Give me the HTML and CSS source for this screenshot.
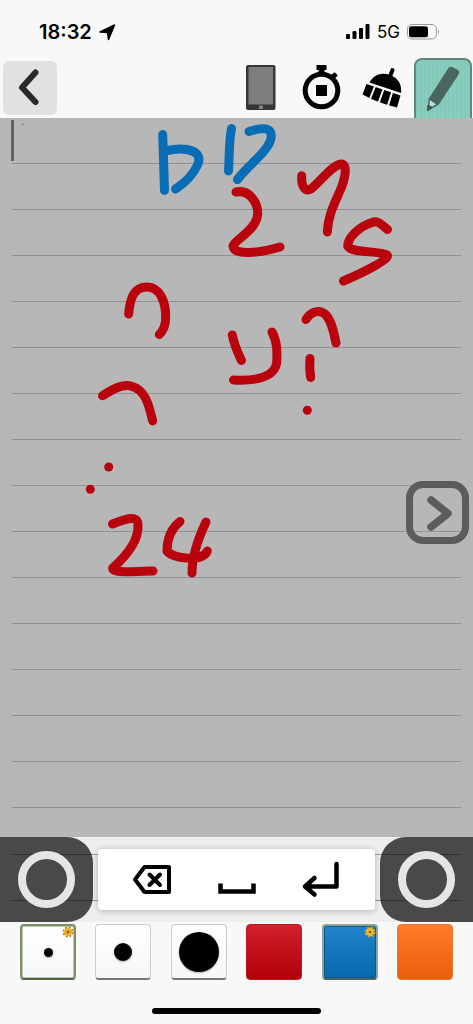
FILE: index.html
```html
<!DOCTYPE html>
<html lang="en">
<head>
    <meta charset="UTF-8">
    <meta name="viewport" content="width=device-width, initial-scale=1.0">
    <title>Notes</title>
    <link rel="stylesheet" href="styles.css">
</head>
<body>
    <header class="status">
        <div class="status-left">
            <span class="time">18:32</span>
            <svg width="17" height="17" viewBox="0 0 17 17"><path d="M15.500 1L9.500 15.500L8.500 8.500L1 8Z" stroke="#000" stroke-width="1.500" stroke-linejoin="round"/></svg>
        </div>
        <div class="status-right">
            <svg width="24" height="16" viewBox="0 0 24 16">
                <rect x="0" y="10" width="4" height="5" rx="1"/>
                <rect x="6.500" y="7" width="4" height="8" rx="1"/>
                <rect x="13" y="4" width="4" height="11" rx="1"/>
                <rect x="19.500" y="0" width="4" height="15" rx="1"/>
            </svg>
            <span class="network">5G</span>
            <svg width="33" height="16" viewBox="0 0 33 16">
                <rect x="0.500" y="0.500" width="29" height="14.500" rx="4.500" fill="none" stroke="#999"/>
                <rect x="2" y="2.200" width="19" height="11" rx="2.500"/>
                <path d="M31 5.500Q33 7.700 31 10Z" fill="#999"/>
            </svg>
        </div>
    </header>

    <nav class="toolbar">
        <button class="back" aria-label="Back">
            <svg width="54" height="54" viewBox="0 0 54 54"><path d="M32.500 11.500L19 26.500L32.500 41" fill="none" stroke="#292929" stroke-width="6" stroke-linecap="round" stroke-linejoin="round"/></svg>
        </button>
        <div class="tools">
            <button class="tool" aria-label="Device">
                <svg width="30" height="46" viewBox="0 0 30 46">
                    <rect x="0" y="0" width="29.500" height="45" rx="2" fill="#363636"/>
                    <rect x="2.500" y="2" width="24.500" height="37.500" fill="#7d7d7d"/>
                    <rect x="13" y="40.500" width="4" height="3.500" rx="1" fill="#888"/>
                </svg>
            </button>
            <button class="tool" aria-label="Timer">
                <svg width="40" height="46" viewBox="0 0 40 46">
                    <circle cx="19.500" cy="25.500" r="16.300" fill="none" stroke="#000" stroke-width="5"/>
                    <path d="M14.500 0H24.500V5H22.500V9H16.500V5H14.500Z"/>
                    <path d="M29 11.500L32.500 8.500L34.500 10.500L31 13.500Z" stroke="#000" stroke-width="2" stroke-linejoin="round"/>
                    <rect x="14" y="20" width="11" height="11"/>
                </svg>
            </button>
            <button class="tool" aria-label="Clear">
                <svg width="42" height="42" viewBox="0 0 42 42">
                    <path d="M30.500 3L27 12" stroke="#000" stroke-width="4" stroke-linecap="round"/>
                    <path d="M7.500 15.500C12 7 20 5 28 8C36 11 40 17 39 26Z"/>
                    <path d="M4.500 17L38.500 28.500L35 40.500Q16 36 0.500 27.500Z"/>
                    <path d="M13.500 18L7.500 33M22 21L16.500 36M30.500 24L25.500 40" stroke="#f8f8f8" stroke-width="2"/>
                </svg>
            </button>
            <button class="tool selected" aria-label="Pencil" aria-pressed="true">
                <svg width="56" height="58" viewBox="0 0 56 58">
                    <path d="M33.500 8Q35 6 37.500 7L43 10Q45 11.500 44 14L23.500 45L13.500 39Z" fill="#4a6660"/>
                    <path d="M14.500 39L22.500 44.500L13 50Z" fill="#c5dad5" stroke="#4a6660" stroke-width="1.500"/>
                    <path d="M13 45L17.500 47.500L12.500 50.500Z" fill="#3d5650" stroke="#3d5650"/>
                </svg>
            </button>
        </div>
    </nav>

    <main class="page">
        <div class="lines"></div>
        <div class="caret"></div>
        <svg class="ink" width="473" height="719" viewBox="0 118 473 719">
            <g class="blue">
                <path d="M162.700 134.500L164.500 190.500"/>
                <path d="M165 151C187 146 205 151 197 166C192 177 183 184 175.500 189"/>
                <path d="M231.500 128.500C229 140 229.500 155 228.500 171"/>
                <path d="M249 131.500C262 127 273 127 271 138C269 151 248 165 237.500 179.500"/>
            </g>
            <g class="red">
                <path d="M236 192C251 189 260 206 257 218C253 232 235 240 233 246C234 256 260 253 280 247"/>
                <path d="M301.700 175.700C301 186 305 192 311 189C320 182 331 166 341 164C348 164 345 177 342 186C337 199 328 213 327.300 232"/>
                <path d="M387.500 229.500C382 225 378 220 372 222.500C358 227 348 238 347.700 246C352 254 379 250 387 255C391 259 362 273 343.500 281"/>
                <path d="M128.700 314C130 298 134 287 147 287C160 287 166 302 165.700 318C165.500 327 163 331 159.300 334.500"/>
                <path d="M102.500 395.700C116 387 124 384 131 386C146 390 149 406 152.700 421"/>
                <path d="M232.300 335C234 345 237.500 352 241.500 360.500"/>
                <path d="M272 332C278 343 277 354 276.700 363C274 378 254 381 233.500 380"/>
                <path d="M306 319.500C311 311 320 309 326 315C332 322 334 333 336 343"/>
                <path d="M310 358.500C309.500 365 309.500 371 310.700 377.500"/>
                <path d="M112.500 524C127 518 138 515 138 525C139 542 124 558 112.700 568C112 574 135 571 153 571"/>
                <path d="M180 521.500C168 531 167 543 167 551C173 559 203 562 207.300 551"/>
                <path d="M206 522C196 543 192 558 192 573"/>
                <circle cx="307.300" cy="410.300" r="4.500"/>
                <circle cx="108.700" cy="467" r="4.500"/>
                <circle cx="90.300" cy="489.300" r="4.500"/>
            </g>
            <circle cx="22.500" cy="124.500" r="1" fill="#888"/>
        </svg>
        <button class="next" aria-label="Next">
            <svg width="48" height="48" viewBox="0 0 48 48"><path d="M17 11L34 24.500L17 38" fill="none" stroke="#5d5b5c" stroke-width="7.500" stroke-linecap="round" stroke-linejoin="round"/></svg>
        </button>
    </main>

    <section class="keys">
        <button class="pad pad-left" aria-label="Left pad"><span class="ring"></span></button>
        <div class="key-card">
            <button class="key" aria-label="Delete">
                <svg width="40" height="40" viewBox="0 0 40 40" fill="none" stroke="#000" stroke-width="4">
                    <path d="M12.500 7H37V32H12.500L3 19.500Z" stroke-linejoin="round"/>
                    <path d="M17.500 14.500L28 25M28 14.500L17.500 25" stroke-linecap="round"/>
                </svg>
            </button>
            <button class="key" aria-label="Space">
                <svg width="40" height="40" viewBox="0 0 40 40"><path d="M3.500 23.500V31.500H36.500V23.500" fill="none" stroke="#000" stroke-width="4.500"/></svg>
            </button>
            <button class="key" aria-label="Enter">
                <svg width="40" height="40" viewBox="0 0 40 40"><path d="M35.500 4V26.500H4M13.500 18L4 26.500L13.500 34.500" fill="none" stroke="#000" stroke-width="4.500" stroke-linecap="round" stroke-linejoin="round"/></svg>
            </button>
        </div>
        <button class="pad pad-right" aria-label="Right pad"><span class="ring"></span></button>
    </section>

    <footer class="footer">
        <div class="palette">
            <button class="swatch active" aria-label="Thin pen">
                <span class="dot small"></span>
                <svg class="gear" width="12" height="12" viewBox="0 0 12 12"><circle cx="6" cy="6" r="4" fill="none" stroke="#b98a1c" stroke-width="3" stroke-dasharray="1.800 1.340"/><circle cx="6" cy="6" r="2.500" fill="#533c10" stroke="#e9b02a" stroke-width="3"/></svg>
            </button>
            <button class="swatch" aria-label="Medium pen"><span class="dot medium"></span></button>
            <button class="swatch" aria-label="Thick pen"><span class="dot large"></span></button>
            <button class="swatch red-swatch" aria-label="Red"></button>
            <button class="swatch blue-swatch" aria-label="Blue">
                <svg class="gear" width="12" height="12" viewBox="0 0 12 12"><circle cx="6" cy="6" r="4" fill="none" stroke="#d9a41f" stroke-width="3" stroke-dasharray="1.800 1.340"/><circle cx="6" cy="6" r="2.500" fill="#533c10" stroke="#edb52b" stroke-width="3"/></svg>
            </button>
            <button class="swatch orange-swatch" aria-label="Orange"></button>
        </div>
        <div class="home-bar"></div>
    </footer>
</body>
</html>
```
FILE: styles.css
```css
* {
    box-sizing: border-box;
}
body {
    margin: 0;
    min-height: 100vh;
    display: flex;
    flex-direction: column;
    font-family: Inter, Roboto, sans-serif;
    background-color: #f8f8f8;
    color: #000;
}
button {
    padding: 0;
    border: none;
    background: none;
    cursor: pointer;
    display: flex;
    align-items: center;
    justify-content: center;
}
svg {
    display: block;
    flex-shrink: 0;
}
.status {
    height: 58px;
    padding: 6px 33px 0 39px;
    display: flex;
    justify-content: space-between;
    align-items: center;
}
.status-left, .status-right {
    display: flex;
    align-items: center;
    gap: 7px;
}
.time {
    font-size: 20px;
    font-weight: 600;
}
.network {
    font-size: 17px;
    font-weight: 400;
}
.toolbar {
    height: 60px;
    padding: 0 1px 0 3px;
    display: flex;
    justify-content: space-between;
    align-items: center;
}
.back {
    width: 54px;
    height: 54px;
    border-radius: 6px;
    background-color: #e1e1e1;
}
.tools {
    display: flex;
    gap: 2px;
}
.tool {
    width: 59px;
    height: 60px;
}
.tool.selected {
    width: 58px;
    border: 2px solid #65847c;
    border-bottom: none;
    border-radius: 8px 8px 0 0;
    background: repeating-linear-gradient(90deg, #81c9b9 0 2px, #8acdbe 2px 4px);
}
.page {
    position: relative;
    flex: 1 0 719px;
    overflow: hidden;
    background-color: #b7b7b7;
}
.lines {
    height: 100%;
    margin: 0 12px;
    background: repeating-linear-gradient(transparent 0 45px, #929292 45px 46px);
}
/* handwriting lies over the ruled lines */
.ink {
    position: absolute;
    top: 0;
    left: 0;
}
.ink path {
    fill: none;
    stroke-width: 9px;
    stroke-linecap: round;
    stroke-linejoin: round;
}
.blue {
    stroke: #096db5;
}
.red path {
    stroke: #b9030d;
}
.red circle {
    fill: #b9030d;
}
.caret {
    position: absolute;
    top: 2px;
    left: 11px;
    width: 3px;
    height: 41px;
    background-color: #626262;
}
.next {
    position: absolute;
    top: 363px;
    right: 4px;
    width: 63px;
    height: 63px;
    border: 7px solid #5d5b5c;
    border-radius: 17px;
}
.keys {
    position: relative;
    height: 85px;
    display: flex;
    align-items: center;
    gap: 5px;
    background-color: #eee;
}
/* the ruled lines go on faintly under the keys */
.keys::after {
    content: "";
    box-sizing: border-box;
    position: absolute;
    top: 17px;
    left: 12px;
    right: 12px;
    height: 47px;
    border-top: 1px solid rgba(0, 0, 0, 0.35);
    border-bottom: 1px solid rgba(0, 0, 0, 0.35);
    pointer-events: none;
}
.pad {
    width: 93px;
    height: 85px;
    background-color: #4b4947;
}
.pad-left {
    border-radius: 0 26px 26px 0;
}
.pad-right {
    border-radius: 26px 0 0 26px;
}
.ring {
    position: relative;
    z-index: 2;
    width: 57px;
    height: 57px;
    border: 8px solid #e6e5e3;
    border-radius: 50%;
}
.key-card {
    position: relative;
    z-index: 1;
    flex: 1;
    height: 61px;
    padding: 0 34px;
    display: flex;
    align-items: center;
    justify-content: space-between;
    border-radius: 4px;
    background-color: #fff;
    box-shadow: 0 1px 6px rgba(0, 0, 0, 0.25);
}
.key {
    width: 40px;
    height: 61px;
}
.footer {
    height: 102px;
    padding: 2px 20px 10px;
    display: flex;
    flex-direction: column;
    justify-content: space-between;
    align-items: center;
}
.palette {
    width: 100%;
    display: flex;
    justify-content: space-between;
}
.swatch {
    position: relative;
    width: 56px;
    height: 56px;
    border: 1px solid #ccc;
    border-bottom: 2px solid #777;
    border-radius: 4px;
    background: linear-gradient(#fff, #f7f7f7);
}
.swatch.active {
    border: 2px solid #7d8f6c;
    border-bottom-color: #526044;
    box-shadow: inset 0 0 0 1px #b9c5ae;
}
.dot {
    border-radius: 50%;
    background-color: #000;
    box-shadow: 0 1px 2px rgba(0, 0, 0, 0.3);
}
.small {
    width: 9px;
    height: 9px;
}
.medium {
    width: 18px;
    height: 18px;
}
.large {
    width: 40px;
    height: 40px;
}
.gear {
    position: absolute;
    top: 0;
    right: 0;
}
.red-swatch {
    border: 1px solid #b31a22;
    background: linear-gradient(#d2202c, #b20009);
}
.blue-swatch {
    border: 2px solid #8aa696;
    border-bottom-color: #49665a;
    background: linear-gradient(#2183ca, #0869af);
    box-shadow: inset 0 0 0 1px #14568a;
}
.orange-swatch {
    border: 1px solid #e4782f;
    background: linear-gradient(#ff7d2c, #ea5d0b);
}
.home-bar {
    width: 169px;
    height: 6px;
    border-radius: 3px;
    background-color: #000;
}
```
